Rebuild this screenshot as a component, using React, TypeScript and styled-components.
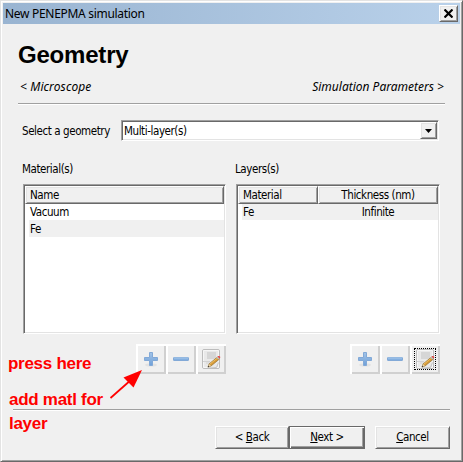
import React from 'react';
import styled, { createGlobalStyle, css } from 'styled-components';

const Global = createGlobalStyle`
  *, *::before, *::after { box-sizing: border-box; }
  body { margin: 0; background: #f0f0f0; }
  button { font: inherit; color: inherit; padding: 0; margin: 0; border-radius: 0; }
`;

const Dialog = styled.div`
  position: relative;
  display: flex;
  flex-direction: column;
  width: 463px;
  height: 462px;
  overflow: hidden;
  background: #f0f0f0;
  border: 1px solid;
  border-color: #e3e3e3 #696969 #696969 #e3e3e3;
  box-shadow: inset 1px 1px #fff, inset -1px -1px #a0a0a0;
  padding: 2px;
  font: 11.5px/17px Tahoma, "DejaVu Sans Condensed", "DejaVu Sans", sans-serif;
  font-stretch: condensed;
  color: #000;
`;

const TitleBar = styled.header`
  display: flex;
  align-items: center;
  justify-content: space-between;
  flex: none;
  width: 457px;
  height: 21px;
  padding: 0 2px;
  background: linear-gradient(90deg, #99b4d1, #b9d1ea);
`;

const Text = styled.span<{ $spacing?: number }>`
  white-space: pre;
  letter-spacing: ${(p) => p.$spacing ?? -0.42}px;
`;

const TitleText = styled(Text)`
  font-family: "Noto Sans", sans-serif;
  font-size: 12px;
`;

const raised = css`
  border: 1px solid;
  border-color: #fff #696969 #696969 #fff;
  box-shadow: inset 1px 1px #e3e3e3, inset -1px -1px #a0a0a0;
  background: #f0f0f0;
`;

const CloseButton = styled.button`
  ${raised}
  display: grid;
  place-items: center;
  width: 19px;
  height: 17px;
`;

const Heading = styled.h1`
  margin: 17px 0 0 15px;
  font: bold 24px/28px "Liberation Sans", Arial, sans-serif;
  letter-spacing: -0.2px;
`;

const Steps = styled.nav`
  display: flex;
  justify-content: space-between;
  margin: 9px 16px 0 17px;
  height: 18px;
  line-height: 18px;
  font-family: "Noto Sans", sans-serif;
  font-size: 12px;
  font-style: italic;
`;

const Rule = styled.hr<{ $inset: number; $top: number }>`
  flex: none;
  width: auto;
  height: 2px;
  margin: ${(p) => p.$top}px ${(p) => p.$inset}px 0 ${(p) => p.$inset}px;
  border: 0;
  border-top: 1px solid #a0a0a0;
  border-bottom: 1px solid #fff;
`;

const GeometryRow = styled.div`
  display: grid;
  grid-template-columns: 99px 318px;
  align-items: center;
  height: 21px;
  margin: 15px 0 0 19px;
  line-height: 19px;
`;

const sunken = css`
  border: 1px solid;
  border-color: #a0a0a0 #fff #fff #a0a0a0;
  box-shadow: inset 1px 1px #696969, inset -1px -1px #e3e3e3;
  background: #fff;
`;

const Combo = styled.div`
  ${sunken}
  display: flex;
  align-items: center;
  justify-content: space-between;
  height: 21px;
  padding: 1px 1px 1px 2px;
`;

const ComboText = styled(Text)`
  padding-top: 1px;
`;

const ComboButton = styled.button`
  ${raised}
  display: grid;
  place-items: center;
  width: 17px;
  height: 17px;
`;

const Panels = styled.div`
  display: grid;
  grid-template-columns: 203px 204px;
  column-gap: 10px;
  margin: 18px 0 0 20px;
`;

const Panel = styled.section`
  display: flex;
  flex-direction: column;
`;

const PanelLabel = styled.div`
  height: 25px;
  margin-left: -1px;
  line-height: 20px;
`;

const List = styled.div`
  ${sunken}
  height: 150px;
  padding: 1px;
`;

const HeaderRow = styled.div<{ $columns: string }>`
  display: grid;
  grid-template-columns: ${(p) => p.$columns};
  height: 17px;
`;

const HeaderCell = styled.div<{ $center?: boolean }>`
  ${raised}
  padding-left: ${(p) => (p.$center ? 0 : 4)}px;
  line-height: 16px;
  text-align: ${(p) => (p.$center ? 'center' : 'left')};
`;

const Row = styled.div<{ $columns: string; $shaded?: boolean }>`
  display: grid;
  grid-template-columns: ${(p) => p.$columns};
  height: 17px;
  margin-left: 4px;
  line-height: 19px;
  background: ${(p) => (p.$shaded ? '#f0f0f0' : '#fff')};
`;

const Cell = styled.div<{ $center?: boolean }>`
  height: 17px;
  padding-left: ${(p) => (p.$center ? 0 : 1)}px;
  text-align: ${(p) => (p.$center ? 'center' : 'left')};
`;

const Tools = styled.div`
  display: flex;
  justify-content: flex-end;
  margin: 10px 0 0;
`;

const ToolButton = styled.button<{ $focused?: boolean }>`
  flex: none;
  display: grid;
  place-items: center;
  width: 30px;
  height: 30px;
  border: 0;
  background: #f0f0f0;
  box-shadow: inset 2px 2px #fff, inset -2px -2px #d0d0d0;
  position: relative;
  &::after {
    content: '';
    display: ${(p) => (p.$focused ? 'block' : 'none')};
    position: absolute;
    inset: 4px;
    border: 1px dotted #000;
  }
`;

const Footer = styled.footer`
  display: flex;
  margin: 15px 0 0 212px;
`;

const PushButton = styled.button<{ $primary?: boolean }>`
  ${raised}
  width: ${(p) => (p.$primary ? 76 : 75)}px;
  height: 23px;
  line-height: 19px;
  ${(p) =>
    p.$primary &&
    css`
      border-color: #696969;
      box-shadow: inset 1px 1px #fff, inset -1px -1px #696969, inset -2px -2px #a0a0a0;
    `}
  &:last-child { margin-left: 10px; }
  &:first-child { width: 74px; }
`;

const Key = styled.span`
  text-decoration: underline;
  text-underline-offset: 1px;
  text-decoration-thickness: 1px;
`;

const Note = styled.div<{ $x: number; $y: number }>`
  position: absolute;
  left: ${(p) => p.$x}px;
  top: ${(p) => p.$y}px;
  white-space: pre;
  font: bold 17px/24px "Liberation Sans", Arial, sans-serif;
  letter-spacing: -0.28px;
  color: #f00;
`;

const Arrow = styled.svg`
  position: absolute;
  left: 105px;
  top: 365px;
`;

const PlusIcon = () => (
  <svg width="16" height="16" viewBox="0 0 16 16">
    <defs>
      <linearGradient id="blue" x1="0" y1="0" x2="0" y2="1">
        <stop offset="0" stopColor="#a3c4e8" />
        <stop offset="1" stopColor="#6fa0d8" />
      </linearGradient>
    </defs>
    <ellipse cx="8" cy="14" rx="6" ry="1.6" fill="#e2e2e2" />
    <path d="M6.5 1.5h3v5h5v3h-5v5h-3v-5h-5v-3h5z" fill="url(#blue)" stroke="#82a9d7" />
  </svg>
);

const MinusIcon = () => (
  <svg width="18" height="16" viewBox="0 0 18 16">
    <rect x="1.5" y="6.5" width="15" height="3" rx=".5" fill="#83afe0" stroke="#82a9d7" />
    <path d="M2 7h14" stroke="#a9c9ea" />
  </svg>
);

const EditIcon = () => (
  <svg width="20" height="22" viewBox="0 0 20 22">
    <rect x="1.5" y="1.5" width="17" height="19" rx="1.5" fill="#e9e9e9" stroke="#bcbcbc" />
    <path d="M2.5 2.5h15v17h-15z" fill="none" stroke="#f6f6f6" />
    <path d="M6 4h9v7H6z" fill="#d6d6d6" />
    <path d="M2 13.5h7M5 15h4" stroke="#d2d2d2" />
    <path d="M6.5 20l9-.5 2-5" fill="none" stroke="#c5c5c5" />
    <path d="M7 19l1-3 8.5-7 2 2-8.5 7z" fill="#d69a38" stroke="#94712f" strokeWidth=".7" />
    <path d="M9 16l7.5-6" stroke="#f4c76b" strokeWidth=".8" />
    <path d="M7 19l1-3 2 2z" fill="#ead7b4" />
    <path d="M6.8 19.2l.5-1.7 1.1 1.2z" fill="#333" />
    <path d="M15.3 9.6l1.2-1 2 2-1.2 1z" fill="#bcbcbc" />
    <path d="M16.5 8.6l.8-.6q1.5-.4 1.9.7t-.7 1.9z" fill="#e34c4c" />
  </svg>
);

const ToolStrip = ({ focusEdit }: { focusEdit?: boolean }) => (
  <Tools>
    <ToolButton aria-label="Add"><PlusIcon /></ToolButton>
    <ToolButton aria-label="Remove"><MinusIcon /></ToolButton>
    <ToolButton aria-label="Edit" $focused={focusEdit}><EditIcon /></ToolButton>
  </Tools>
);

export default function App() {
  return (
    <>
      <Global />
      <Dialog>
        <TitleBar>
          <TitleText $spacing={-0.3}>New PENEPMA simulation</TitleText>
          <CloseButton aria-label="Close">
            <svg width="9" height="9" viewBox="0 0 9 9">
              <path d="M.5.5l8 8M8.5.5l-8 8" stroke="#000" strokeWidth="2.2" />
            </svg>
          </CloseButton>
        </TitleBar>
        <Heading>Geometry</Heading>
        <Steps>
          <Text $spacing={0.1}>&lt; Microscope</Text>
          <Text $spacing={0}>Simulation Parameters &gt;</Text>
        </Steps>
        <Rule $inset={15} $top={7} />
        <GeometryRow>
          <ComboText>Select a geometry</ComboText>
          <Combo>
            <ComboText>Multi-layer(s)</ComboText>
            <ComboButton aria-label="Open">
              <svg width="7" height="4" viewBox="0 0 7 4"><path d="M0 0h7L3.5 4z" /></svg>
            </ComboButton>
          </Combo>
        </GeometryRow>
        <Panels>
          <Panel>
            <PanelLabel><Text>Material(s)</Text></PanelLabel>
            <List>
              <HeaderRow $columns="1fr"><HeaderCell><Text>Name</Text></HeaderCell></HeaderRow>
              <Row $columns="1fr"><Cell><Text>Vacuum</Text></Cell></Row>
              <Row $columns="1fr" $shaded><Cell><Text>Fe</Text></Cell></Row>
            </List>
            <ToolStrip />
          </Panel>
          <Panel>
            <PanelLabel><Text>Layers(s)</Text></PanelLabel>
            <List>
              <HeaderRow $columns="80px 1fr">
                <HeaderCell><Text>Material</Text></HeaderCell>
                <HeaderCell $center><Text>Thickness (nm)</Text></HeaderCell>
              </HeaderRow>
              <Row $columns="76px 1fr" $shaded>
                <Cell><Text>Fe</Text></Cell>
                <Cell $center><Text>Infinite</Text></Cell>
              </Row>
            </List>
            <ToolStrip focusEdit />
          </Panel>
        </Panels>
        <Rule $inset={10} $top={35} />
        <Footer>
          <PushButton><Text>&lt; <Key>B</Key>ack</Text></PushButton>
          <PushButton $primary><Text><Key>N</Key>ext &gt;</Text></PushButton>
          <PushButton><Text><Key>C</Key>ancel</Text></PushButton>
        </Footer>
        <Note $x={7} $y={351}>press here</Note>
        <Note $x={8} $y={387}>add matl for</Note>
        <Note $x={8} $y={411}>layer</Note>
        <Arrow width="40" height="36" viewBox="0 0 40 36">
          <path d="M4.5 32L26 13" stroke="#f00" strokeWidth="1.7" />
          <path d="M36 4L17.5 11.5 27.5 21.5z" fill="#f00" />
        </Arrow>
      </Dialog>
    </>
  );
}
